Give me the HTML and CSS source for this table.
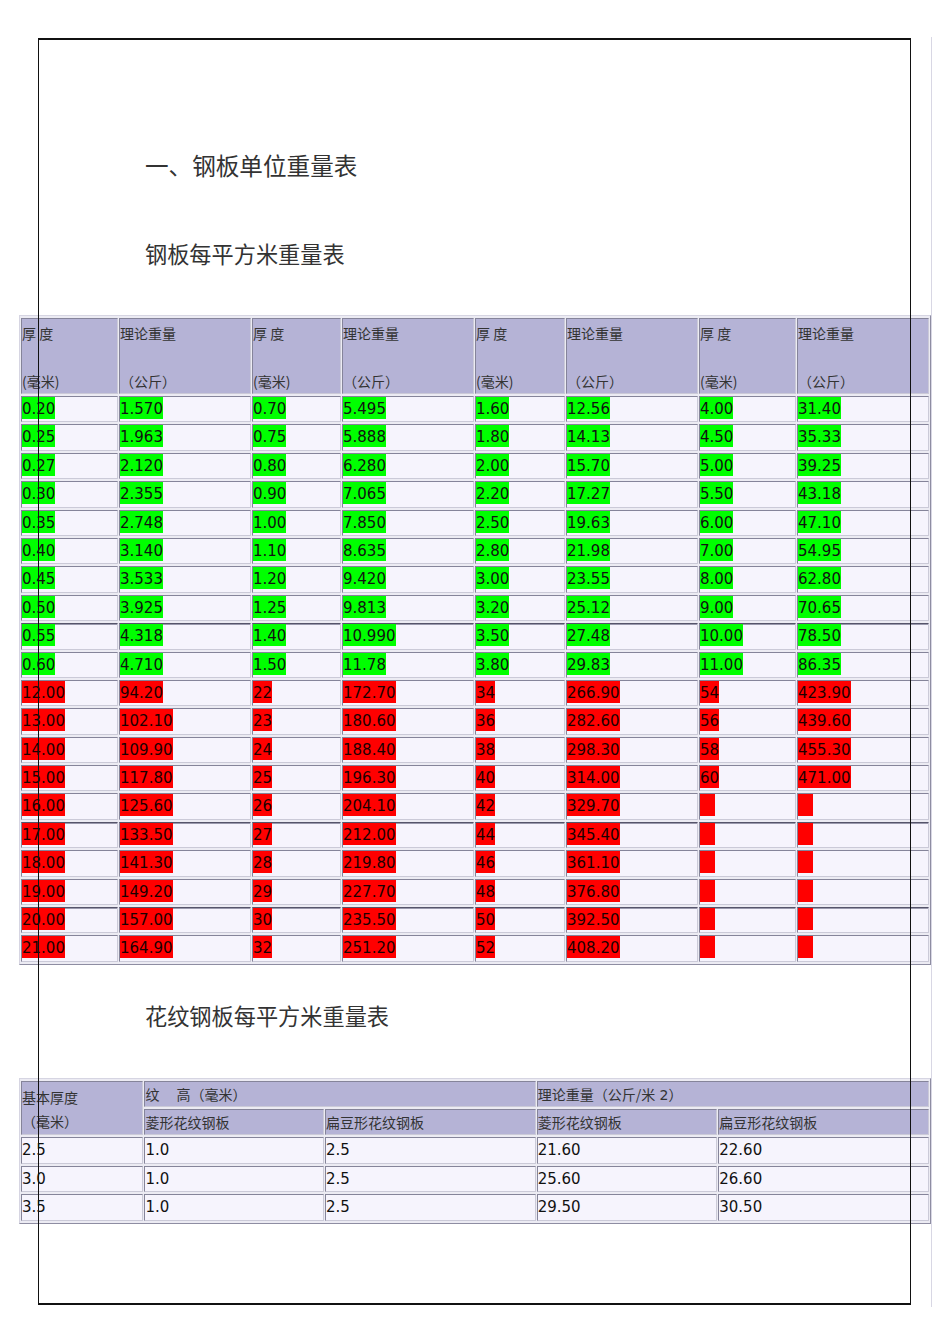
FILE: index.html
```html
<!DOCTYPE html>
<html lang="zh">
<head>
<meta charset="utf-8">
<title>钢板单位重量表</title>
<link rel="stylesheet" href="styles.css">
</head>
<body>
<div class="page">
  <h1 class="title">一、钢板单位重量表</h1>
  <h2 class="subtitle sub1">钢板每平方米重量表</h2>

  <table class="grid t1">
    <colgroup>
      <col class="w97"><col class="w132"><col class="w89"><col class="w132"><col class="w90"><col class="w132"><col class="w97"><col class="w132">
    </colgroup>
    <tr class="head">
      <th>厚 度<br><br>(毫米)</th><th>理论重量<br><br>（公斤）</th>
      <th>厚 度<br><br>(毫米)</th><th>理论重量<br><br>（公斤）</th>
      <th>厚 度<br><br>(毫米)</th><th>理论重量<br><br>（公斤）</th>
      <th>厚 度<br><br>(毫米)</th><th>理论重量<br><br>（公斤）</th>
    </tr>
    <tr><td><span class="g">0.20</span></td><td><span class="g">1.570</span></td><td><span class="g">0.70</span></td><td><span class="g">5.495</span></td><td><span class="g">1.60</span></td><td><span class="g">12.56</span></td><td><span class="g">4.00</span></td><td><span class="g">31.40</span></td></tr>
    <tr><td><span class="g">0.25</span></td><td><span class="g">1.963</span></td><td><span class="g">0.75</span></td><td><span class="g">5.888</span></td><td><span class="g">1.80</span></td><td><span class="g">14.13</span></td><td><span class="g">4.50</span></td><td><span class="g">35.33</span></td></tr>
    <tr><td><span class="g">0.27</span></td><td><span class="g">2.120</span></td><td><span class="g">0.80</span></td><td><span class="g">6.280</span></td><td><span class="g">2.00</span></td><td><span class="g">15.70</span></td><td><span class="g">5.00</span></td><td><span class="g">39.25</span></td></tr>
    <tr><td><span class="g">0.30</span></td><td><span class="g">2.355</span></td><td><span class="g">0.90</span></td><td><span class="g">7.065</span></td><td><span class="g">2.20</span></td><td><span class="g">17.27</span></td><td><span class="g">5.50</span></td><td><span class="g">43.18</span></td></tr>
    <tr><td><span class="g">0.35</span></td><td><span class="g">2.748</span></td><td><span class="g">1.00</span></td><td><span class="g">7.850</span></td><td><span class="g">2.50</span></td><td><span class="g">19.63</span></td><td><span class="g">6.00</span></td><td><span class="g">47.10</span></td></tr>
    <tr><td><span class="g">0.40</span></td><td><span class="g">3.140</span></td><td><span class="g">1.10</span></td><td><span class="g">8.635</span></td><td><span class="g">2.80</span></td><td><span class="g">21.98</span></td><td><span class="g">7.00</span></td><td><span class="g">54.95</span></td></tr>
    <tr><td><span class="g">0.45</span></td><td><span class="g">3.533</span></td><td><span class="g">1.20</span></td><td><span class="g">9.420</span></td><td><span class="g">3.00</span></td><td><span class="g">23.55</span></td><td><span class="g">8.00</span></td><td><span class="g">62.80</span></td></tr>
    <tr><td><span class="g">0.50</span></td><td><span class="g">3.925</span></td><td><span class="g">1.25</span></td><td><span class="g">9.813</span></td><td><span class="g">3.20</span></td><td><span class="g">25.12</span></td><td><span class="g">9.00</span></td><td><span class="g">70.65</span></td></tr>
    <tr class="brk"><td><span class="g">0.55</span></td><td><span class="g">4.318</span></td><td><span class="g">1.40</span></td><td><span class="g">10.990</span></td><td><span class="g">3.50</span></td><td><span class="g">27.48</span></td><td><span class="g">10.00</span></td><td><span class="g">78.50</span></td></tr>
    <tr><td><span class="g">0.60</span></td><td><span class="g">4.710</span></td><td><span class="g">1.50</span></td><td><span class="g">11.78</span></td><td><span class="g">3.80</span></td><td><span class="g">29.83</span></td><td><span class="g">11.00</span></td><td><span class="g">86.35</span></td></tr>
    <tr><td><span class="r">12.00</span></td><td><span class="r">94.20</span></td><td><span class="r">22</span></td><td><span class="r">172.70</span></td><td><span class="r">34</span></td><td><span class="r">266.90</span></td><td><span class="r">54</span></td><td><span class="r">423.90</span></td></tr>
    <tr><td><span class="r">13.00</span></td><td><span class="r">102.10</span></td><td><span class="r">23</span></td><td><span class="r">180.60</span></td><td><span class="r">36</span></td><td><span class="r">282.60</span></td><td><span class="r">56</span></td><td><span class="r">439.60</span></td></tr>
    <tr><td><span class="r">14.00</span></td><td><span class="r">109.90</span></td><td><span class="r">24</span></td><td><span class="r">188.40</span></td><td><span class="r">38</span></td><td><span class="r">298.30</span></td><td><span class="r">58</span></td><td><span class="r">455.30</span></td></tr>
    <tr><td><span class="r">15.00</span></td><td><span class="r">117.80</span></td><td><span class="r">25</span></td><td><span class="r">196.30</span></td><td><span class="r">40</span></td><td><span class="r">314.00</span></td><td><span class="r">60</span></td><td><span class="r">471.00</span></td></tr>
    <tr><td><span class="r">16.00</span></td><td><span class="r">125.60</span></td><td><span class="r">26</span></td><td><span class="r">204.10</span></td><td><span class="r">42</span></td><td><span class="r">329.70</span></td><td><span class="r e"></span></td><td><span class="r e"></span></td></tr>
    <tr class="brk"><td><span class="r">17.00</span></td><td><span class="r">133.50</span></td><td><span class="r">27</span></td><td><span class="r">212.00</span></td><td><span class="r">44</span></td><td><span class="r">345.40</span></td><td><span class="r e"></span></td><td><span class="r e"></span></td></tr>
    <tr><td><span class="r">18.00</span></td><td><span class="r">141.30</span></td><td><span class="r">28</span></td><td><span class="r">219.80</span></td><td><span class="r">46</span></td><td><span class="r">361.10</span></td><td><span class="r e"></span></td><td><span class="r e"></span></td></tr>
    <tr><td><span class="r">19.00</span></td><td><span class="r">149.20</span></td><td><span class="r">29</span></td><td><span class="r">227.70</span></td><td><span class="r">48</span></td><td><span class="r">376.80</span></td><td><span class="r e"></span></td><td><span class="r e"></span></td></tr>
    <tr class="brk"><td><span class="r">20.00</span></td><td><span class="r">157.00</span></td><td><span class="r">30</span></td><td><span class="r">235.50</span></td><td><span class="r">50</span></td><td><span class="r">392.50</span></td><td><span class="r e"></span></td><td><span class="r e"></span></td></tr>
    <tr><td><span class="r">21.00</span></td><td><span class="r">164.90</span></td><td><span class="r">32</span></td><td><span class="r">251.20</span></td><td><span class="r">52</span></td><td><span class="r">408.20</span></td><td><span class="r e"></span></td><td><span class="r e"></span></td></tr>
  </table>

  <h2 class="subtitle sub2">花纹钢板每平方米重量表</h2>

  <table class="grid t2">
    <colgroup>
      <col class="w122"><col class="w179"><col class="w210"><col class="w180"><col class="w210">
    </colgroup>
    <tr class="hrow">
      <th rowspan="2" class="tall">基本厚度<br>（毫米）</th>
      <th colspan="2">纹　&nbsp;高（毫米）</th>
      <th colspan="2">理论重量（公斤/米<span class="num"> 2</span>）</th>
    </tr>
    <tr class="hrow">
      <th>菱形花纹钢板</th><th>扁豆形花纹钢板</th><th>菱形花纹钢板</th><th>扁豆形花纹钢板</th>
    </tr>
    <tr><td>2.5</td><td>1.0</td><td>2.5</td><td>21.60</td><td>22.60</td></tr>
    <tr><td>3.0</td><td>1.0</td><td>2.5</td><td>25.60</td><td>26.60</td></tr>
    <tr><td>3.5</td><td>1.0</td><td>2.5</td><td>29.50</td><td>30.50</td></tr>
  </table>

  <div class="frame"></div>
  <div class="edge"></div>
</div>
</body>
</html>
```

FILE: styles.css
```css
html, body {
  margin: 0;
  padding: 0;
  background: #ffffff;
}

.page {
  position: relative;
  width: 950px;
  height: 1344px;
  padding: 0 0 0 19px;
  box-sizing: border-box;
  font-family: "Noto Sans CJK SC", sans-serif;
  color: #222;
}

.title {
  margin: 0;
  padding-top: 150px;
  padding-left: 126px;
  font-size: 23.6px;
  line-height: 30px;
  font-weight: 400;
  color: #333;
}

.subtitle {
  margin: 0;
  padding-left: 126px;
  font-size: 22.2px;
  line-height: 30px;
  font-weight: 400;
  color: #333;
}

.sub1 {
  margin-top: 58px;
  margin-bottom: 47px;
}

.sub2 {
  margin-top: 35px;
  margin-bottom: 48px;
}

.grid {
  table-layout: fixed;
  width: 912px;
  border-collapse: separate;
  border-spacing: 1px 2px;
  background: #ecebf3;
  border-style: solid;
  border-width: 1px;
  border-color: #d6d5e2 #8e8da2 #8e8da2 #d6d5e2;
}

.w97 { width: 97px; }
.w132 { width: 132px; }
.w89 { width: 89px; }
.w90 { width: 90px; }
.w122 { width: 122px; }
.w179 { width: 179px; }
.w210 { width: 210px; }
.w180 { width: 180px; }

.grid th,
.grid td {
  padding: 0;
  text-align: left;
  vertical-align: top;
  border-style: solid;
  border-width: 1px;
  border-color: #85849a #cbcad8 #cbcad8 #85849a;
  overflow: hidden;
  white-space: nowrap;
}

.grid th {
  background: #b5b3d6;
  font-family: "Noto Sans CJK SC", sans-serif;
  font-weight: 400;
  font-size: 14px;
  color: #333;
}

.grid td {
  background: #f6f4fd;
  font-family: "DejaVu Sans", "Noto Sans CJK SC", sans-serif;
  font-size: 15px;
  color: #111;
}

.t1 .head th {
  height: 75px;
  box-sizing: border-box;
  padding-top: 2px;
  line-height: 24px;
}

.t1 td {
  height: 26.4px;
  box-sizing: border-box;
}

.t1 .brk td {
  border-top-color: #55546a;
  box-shadow: inset 0 1px 0 #9a99ad;
}

.g,
.r {
  display: inline-block;
  vertical-align: top;
  padding-top: 4px;
  line-height: 17px;
  height: 18px;
  color: #111;
}

.g { background: #00ff00; }
.r { background: #ff0000; color: #1a0000; }
.r.e { width: 15px; }

.t2 .hrow th {
  height: 26.3px;
  box-sizing: border-box;
  padding-top: 1px;
  line-height: 22px;
}

.t2 .hrow th.tall {
  padding-top: 3px;
  line-height: 24px;
}

.t2 .num {
  font-family: "DejaVu Sans", sans-serif;
  font-size: 14px;
}

.t2 td {
  height: 26.4px;
  box-sizing: border-box;
  padding-top: 2px;
  line-height: 20px;
}

.frame {
  position: absolute;
  left: 38px;
  top: 38px;
  width: 873px;
  height: 1267px;
  box-sizing: border-box;
  border-left: 1px solid #111;
  border-right: 1px solid #111;
  border-top: 2px solid #111;
  border-bottom: 2px solid #111;
  pointer-events: none;
}

.edge {
  position: absolute;
  left: 931px;
  top: 37px;
  width: 1px;
  height: 1270px;
  background: #d8d7e4;
  pointer-events: none;
}
```
